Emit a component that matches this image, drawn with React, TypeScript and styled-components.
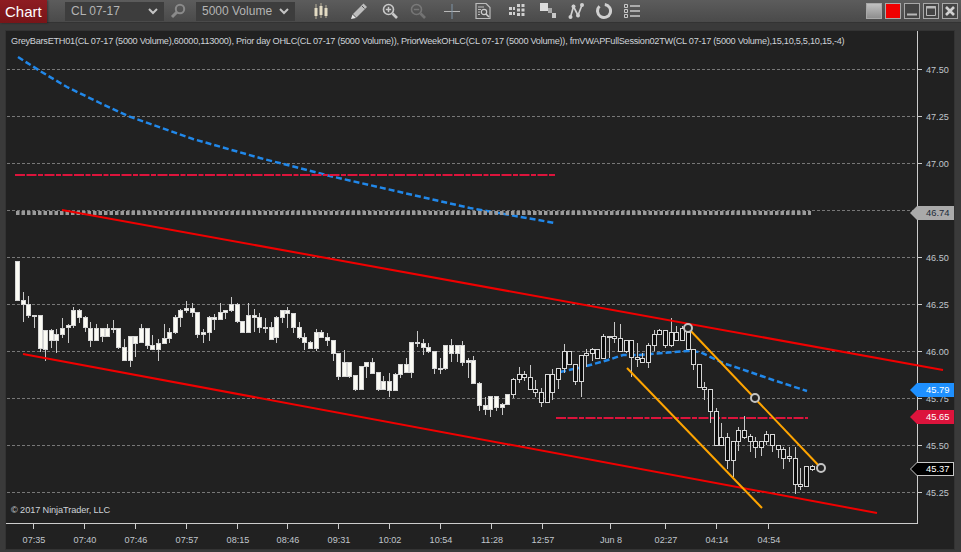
import styled, { createGlobalStyle } from "styled-components";

const GlobalStyle = createGlobalStyle`
  html, body {
    margin: 0;
    padding: 0;
    height: 100%;
    overflow: hidden;
    background: #3a3a3a;
    font-family: "Liberation Sans", Arial, sans-serif;
  }
`;

const Page = styled.div`
  width: 961px;
  height: 552px;
  display: flex;
  flex-direction: column;
  overflow: hidden;
`;

const Toolbar = styled.div`
  height: 23px;
  flex: none;
  display: flex;
  align-items: center;
  background: linear-gradient(#5c5c5c, #4a4a4a);
  border-bottom: 1px solid #333;
  box-sizing: border-box;
`;

const ChartTab = styled.div`
  width: 47px;
  height: 23px;
  flex: none;
  box-sizing: border-box;
  padding-left: 5px;
  line-height: 23px;
  font-size: 15px;
  color: #fff;
  background: linear-gradient(#8e1c22, #781518);
  box-shadow: 1px 0 2px rgba(0, 0, 0, 0.4);
`;

const Select = styled.div<{ $gap: number }>`
  width: 99px;
  height: 19px;
  flex: none;
  margin-left: ${(p) => p.$gap}px;
  padding: 0 6px;
  box-sizing: border-box;
  display: flex;
  align-items: center;
  justify-content: space-between;
  background: #3d3d3d;
  color: #b4b4b4;
  font-size: 12px;
`;

const Tool = styled.span<{ $gap: number; $dim?: boolean }>`
  width: 16px;
  height: 16px;
  flex: none;
  display: block;
  margin-left: ${(p) => p.$gap}px;
  opacity: ${(p) => (p.$dim ? 0.3 : 1)};
  svg {
    display: block;
  }
`;

const WindowButtons = styled.div`
  margin-left: auto;
  margin-right: 3px;
  display: flex;
  gap: 3px;
`;

const WindowButton = styled.div<{ $fill: string }>`
  width: 16px;
  height: 16px;
  box-sizing: border-box;
  border: 1px solid #a8a8a8;
  background: ${(p) => p.$fill};
  svg {
    display: block;
  }
`;

const Frame = styled.div`
  position: relative;
  width: 950px;
  height: 520px;
  margin: 7px 0 0 5px;
  background: #212121;
  box-shadow: inset 0 0 0 1px #333;
  flex: none;
`;

const ChartSvg = styled.svg`
  display: block;
`;

const Legend = styled.div`
  position: absolute;
  left: 6px;
  top: 5px;
  font-size: 9.2px;
  letter-spacing: -0.27px;
  line-height: 12px;
  color: #ced3d8;
  white-space: nowrap;
`;

const Copyright = styled.div`
  position: absolute;
  left: 6px;
  top: 474px;
  font-size: 9.2px;
  letter-spacing: -0.1px;
  line-height: 12px;
  color: #ced3d8;
`;

const TickLabel = styled.text`
  font-family: "Liberation Sans", Arial, sans-serif;
  font-size: 9.1px;
  fill: #c0c6cc;
`;

const PriceTag = styled.div<{ $fill: string; $ink: string; $edge?: string }>`
  position: absolute;
  left: 905px;
  width: 44px;
  height: 14px;
  box-sizing: border-box;
  padding: 1px;
  background: ${(p) => p.$edge || p.$fill};
  clip-path: polygon(0 50%, 7px 0, 100% 0, 100% 100%, 7px 100%);
  span {
    display: block;
    height: 100%;
    padding-left: 15px;
    line-height: 12px;
    font-size: 9.4px;
    color: ${(p) => p.$ink};
    background: ${(p) => p.$fill};
    clip-path: polygon(0 50%, 6px 0, 100% 0, 100% 100%, 6px 100%);
  }
`;

const Chevron = () => (
  <svg width="10" height="7" viewBox="0 0 10 7">
    <path d="M1 1l4 4 4-4" fill="none" stroke="#c4c4c4" strokeWidth="2" />
  </svg>
);

const Icon = ({ children }: { children: React.ReactNode }) => (
  <svg width="16" height="16" viewBox="0 0 16 16">
    {children}
  </svg>
);

const Magnifier = ({ plus, minus }: { plus?: boolean; minus?: boolean }) => (
  <Icon>
    <circle cx="6.5" cy="6.5" r="5" fill="none" stroke="#c8c8c8" strokeWidth="1.6" />
    <path d="M10.5 10.5L15 15" stroke="#c8c8c8" strokeWidth="2.6" />
    {(plus || minus) && <path d="M3.8 6.5h5.4" stroke="#c8c8c8" strokeWidth="1.5" />}
    {plus && <path d="M6.5 3.8v5.4" stroke="#c8c8c8" strokeWidth="1.5" />}
  </Icon>
);

// [body top, body bottom, wick top, wick bottom] in screen pixels
const bars: number[][] = [
  [261, 300, 261, 300], [300, 304, 292, 322], [304, 315, 296, 318], [315, 316, 315, 328], [315, 348, 315, 352],
  [330, 349, 330, 361], [330, 340, 329, 348], [334, 340, 329, 353], [328, 334, 318, 338], [325, 327, 324, 343],
  [310, 325, 307, 328], [310, 317, 309, 323], [317, 327, 316, 332], [328, 340, 322, 347], [328, 340, 324, 340],
  [328, 336, 328, 342], [328, 336, 324, 336], [328, 329, 320, 333], [328, 347, 328, 349], [347, 360, 339, 360],
  [336, 360, 336, 367], [336, 343, 336, 357], [328, 342, 324, 342], [328, 345, 328, 349], [345, 349, 335, 349],
  [343, 349, 339, 361], [338, 343, 324, 343], [332, 338, 328, 343], [317, 332, 315, 334], [310, 317, 309, 327],
  [308, 310, 301, 313], [308, 312, 303, 317], [312, 334, 312, 338], [332, 334, 329, 343], [317, 332, 316, 341],
  [317, 319, 314, 330], [312, 319, 303, 319], [310, 312, 310, 319], [304, 310, 297, 312], [304, 321, 303, 323],
  [321, 332, 321, 332], [315, 332, 303, 332], [315, 317, 309, 332], [317, 327, 313, 333], [327, 328, 318, 333],
  [327, 339, 322, 339], [317, 337, 316, 343], [310, 317, 310, 323], [310, 313, 307, 328], [313, 327, 313, 333],
  [327, 337, 322, 339], [337, 342, 333, 350], [342, 348, 341, 349], [332, 348, 329, 351], [332, 337, 330, 337],
  [337, 340, 333, 346], [340, 353, 340, 361], [353, 376, 353, 380], [362, 376, 350, 376], [362, 376, 362, 378],
  [375, 389, 375, 391], [366, 389, 366, 389], [362, 366, 362, 378], [362, 373, 358, 373], [372, 389, 372, 391],
  [381, 389, 376, 390], [381, 390, 373, 397], [374, 390, 373, 390], [364, 374, 364, 378], [364, 372, 358, 372],
  [342, 372, 342, 378], [342, 343, 331, 347], [343, 347, 339, 355], [347, 351, 343, 353], [351, 368, 351, 374],
  [368, 369, 358, 374], [345, 368, 345, 370], [345, 353, 339, 362], [345, 353, 345, 362], [345, 362, 341, 366],
  [360, 362, 358, 378], [360, 383, 356, 383], [383, 405, 382, 411], [405, 409, 397, 415], [396, 409, 396, 417],
  [396, 407, 396, 411], [404, 407, 403, 415], [394, 404, 394, 404], [379, 394, 378, 398], [374, 379, 367, 383],
  [374, 377, 371, 381], [377, 389, 365, 389], [389, 392, 380, 397], [392, 402, 388, 407], [374, 402, 374, 402],
  [374, 392, 369, 400], [368, 379, 368, 389], [351, 368, 344, 373], [351, 364, 351, 364], [364, 381, 364, 385],
  [355, 381, 355, 397], [353, 355, 349, 367], [349, 353, 348, 361], [349, 358, 349, 358], [336, 358, 334, 358],
  [336, 337, 336, 358], [336, 338, 322, 343], [338, 351, 324, 351], [340, 351, 340, 353], [340, 357, 340, 377],
  [357, 359, 343, 367], [358, 362, 353, 362], [345, 362, 343, 368], [334, 345, 330, 351], [330, 334, 329, 334],
  [330, 345, 330, 348], [332, 345, 318, 347], [332, 340, 326, 340], [328, 340, 326, 340], [332, 349, 332, 349],
  [349, 364, 349, 370], [364, 387, 364, 387], [387, 389, 382, 400], [389, 411, 389, 423], [411, 445, 408, 445],
  [437, 445, 423, 445], [437, 460, 433, 469], [441, 460, 441, 477], [430, 441, 427, 451], [430, 437, 416, 439],
  [436, 441, 434, 452], [441, 447, 437, 458], [441, 447, 441, 456], [434, 441, 431, 445], [434, 445, 434, 452],
  [445, 449, 445, 458], [449, 458, 447, 469], [456, 458, 447, 462], [458, 484, 447, 494], [484, 486, 468, 490],
  [466, 486, 466, 486], [466, 469, 465, 471],
];

// 46.75 has a grid line but its label sits under the 46.74 price tag
const priceGrid = [
  [69, "47.50"], [116, "47.25"], [163, "47.00"], [210, ""], [257, "46.50"],
  [304, "46.25"], [351, "46.00"], [398, "45.75"], [445, "45.50"], [492, "45.25"],
] as const;

const timeTicks = [
  [33, "07:35"], [84, "07:40"], [135, "07:46"], [186, "07:57"], [237, "08:15"], [287, "08:46"], [338, "09:31"],
  [389, "10:02"], [440, "10:54"], [491, "11:28"], [542, "12:57"], [610, "Jun 8"], [665, "02:27"], [716, "04:14"], [768, "04:54"],
] as const;

const vwapTop = "M18 57L40 71 67 87 100 103 128 116 193 139 260 158 330 176 400 192 470 208 555 223";
const vwapLow = "M560 372L583 367 608 360 623 355 640 355 673 352 688 351 700 352 723 363 747 371 773 380 807 391";
const levelDash = "10 1.500 10 1.500 5 1.500 10 1.500 5 1.500";

export default function App() {
  return (
    <Page>
      <GlobalStyle />
      <Toolbar>
        <ChartTab>Chart</ChartTab>
        <Select $gap={18}>
          CL 07-17
          <Chevron />
        </Select>
        <Tool $gap={6}>
          <svg width="16" height="16" viewBox="0 0 16 16">
            <circle cx="10" cy="6" r="4.2" fill="none" stroke="#8a8a8a" strokeWidth="2" />
            <path d="M7 9l-5 5" stroke="#8a8a8a" strokeWidth="3" />
          </svg>
        </Tool>
        <Select $gap={10}>
          5000 Volume
          <Chevron />
        </Select>
        <Tool $gap={18}>
          <Icon>
            <path d="M3 1v15M8 0v15M13 2v13" stroke="#b8b09a" strokeWidth="1" />
            <path d="M1.500 5h3v8h-3zM6.500 3h3v9h-3zM11.500 5h3v8h-3z" fill="#e4dcc4" />
          </Icon>
        </Tool>
        <Tool $gap={22}>
          <Icon>
            <path d="M12.500 .5L16 4 5.500 14.500 2 11z" fill="#bdbdbd" />
            <path d="M1.500 11.500l3.500 3.500-5 1z" fill="#e8e8e8" />
            <path d="M11 3l2.500 2.500" stroke="#555" strokeWidth="1" />
          </Icon>
        </Tool>
        <Tool $gap={15}>
          <Magnifier plus />
        </Tool>
        <Tool $gap={12} $dim>
          <Magnifier minus />
        </Tool>
        <Tool $gap={18}>
          <Icon>
            <path d="M0 8.500h16" stroke="#b8b8b8" strokeWidth="1" />
            <path d="M8 1v15" stroke="#7e94a6" strokeWidth="1" />
          </Icon>
        </Tool>
        <Tool $gap={15}>
          <Icon>
            <path d="M1 .5h10l4 4v11H1z" fill="none" stroke="#bcbcbc" strokeWidth="1.200" />
            <path d="M3 4h6M3 6.500h3M3 9h2M3 11.500h2" stroke="#bcbcbc" strokeWidth="1" />
            <circle cx="9" cy="9" r="2.700" fill="none" stroke="#d0d0d0" strokeWidth="1.200" />
            <path d="M11 11l3 3" stroke="#d0d0d0" strokeWidth="1.600" />
          </Icon>
        </Tool>
        <Tool $gap={18}>
          <Icon>
            <path d="M0 4h3v3H0zM0 9h3v3H0zM4 4h2v3H4zM4 9h2v3H4z" fill="#d0d0d0" />
            <path d="M8 1h3v3H8zM8 5.500h3v3H8zM8 10h3v3H8zM12.500 1h3v3h-3zM12.500 5.500h3v3h-3zM12.500 10h3v3h-3z" fill="#d0d0d0" />
          </Icon>
        </Tool>
        <Tool $gap={15}>
          <Icon>
            <path d="M0 0h8v8H0z" fill="#dcdcdc" />
            <path d="M8 5h4v5H8z" fill="#a8a8a8" />
            <path d="M12 10h4v5h-4z" fill="#c8c8c8" />
          </Icon>
        </Tool>
        <Tool $gap={12}>
          <Icon>
            <path d="M2.500 14L5.500 3.500 10 12.500 14 2" fill="none" stroke="#d0d0d0" strokeWidth="1.700" />
            <circle cx="2.500" cy="14" r="2" fill="#d0d0d0" />
            <circle cx="5.500" cy="3.500" r="2" fill="#d0d0d0" />
            <circle cx="10" cy="12.500" r="2" fill="#d0d0d0" />
            <circle cx="14" cy="2" r="2" fill="#d0d0d0" />
          </Icon>
        </Tool>
        <Tool $gap={12}>
          <Icon>
            <path d="M8.800 1.500A6.500 6.500 0 1 1 3.500 3.300" fill="none" stroke="#d0d0d0" strokeWidth="3" />
          </Icon>
        </Tool>
        <Tool $gap={12}>
          <Icon>
            <path d="M.5 1.500h3v3h-3zM.5 6.500h3v3h-3zM.5 11.500h3v3h-3z" fill="none" stroke="#c8c8c8" strokeWidth="1" />
            <path d="M6 3h10M6 8h10M6 13h10" stroke="#c8c8c8" strokeWidth="1.600" />
          </Icon>
        </Tool>
        <WindowButtons>
          <WindowButton $fill="linear-gradient(#c0c0c0, #8e8e8e)" />
          <WindowButton $fill="#f00000" />
          <WindowButton $fill="#444">
            <svg width="14" height="14" viewBox="0 0 14 14">
              <path d="M2 10.500h10" stroke="#b8b8b8" strokeWidth="2" />
            </svg>
          </WindowButton>
          <WindowButton $fill="#444">
            <svg width="14" height="14" viewBox="0 0 14 14">
              <path d="M2.500 2.500h9v9h-9z" fill="none" stroke="#b8b8b8" />
              <path d="M2 3.500h10" stroke="#b8b8b8" strokeWidth="2" />
            </svg>
          </WindowButton>
          <WindowButton $fill="#444">
            <svg width="14" height="14" viewBox="0 0 14 14">
              <path d="M3 3l8 8M11 3l-8 8" stroke="#d0d0d0" strokeWidth="2.600" />
            </svg>
          </WindowButton>
        </WindowButtons>
      </Toolbar>
      <Frame>
        {/* viewBox keeps the drawing in screen pixels, the frame starts at 5,30 */}
        <ChartSvg width="950" height="520" viewBox="5 30 950 520">
          <g shapeRendering="crispEdges">
            {priceGrid.map(([y]) => (
              <g key={y}>
                <path d={`M7 ${y + 0.5}H917`} stroke="#777" strokeDasharray="3 2" />
                <path d={`M917 ${y + 0.5}h5`} stroke="#ccc" />
              </g>
            ))}
            <path d="M917.500 31V523" stroke="#ccc" />
            <path d="M6 523.500H917.500" stroke="#ccc" />
            {timeTicks.map(([x, label]) => (
              <path key={label} d={`M${x + 0.5} 524v5`} stroke="#ccc" />
            ))}
          </g>
          {priceGrid
            .filter(([, label]) => label)
            .map(([y, label]) => (
              <TickLabel key={label} x="926" y={y + 3.5}>
                {label}
              </TickLabel>
            ))}
          {timeTicks.map(([x, label]) => (
            <TickLabel key={label} x={x + 1} y="543" textAnchor="middle">
              {label}
            </TickLabel>
          ))}

          <path d={vwapTop} fill="none" stroke="#2188ea" strokeWidth="2.500" strokeDasharray="6 3" />
          <path d={vwapLow} fill="none" stroke="#2188ea" strokeWidth="2.500" strokeDasharray="6 3" />
          <path d="M15 175H555" stroke="#dc143c" strokeWidth="2" strokeDasharray={levelDash} />
          <path d="M16 213H811" stroke="#9a9a9a" strokeWidth="4" strokeDasharray="3.500 2" />
          <path d="M556 418H808" stroke="#dc143c" strokeWidth="2" strokeDasharray={levelDash} />

          <g shapeRendering="crispEdges">
            {bars.map(([top, bottom, wickTop, wickBottom], i) => {
              const x = Math.round(17 + 5.635 * i) + 0.5;
              return (
                <g key={i}>
                  <path d={`M${x} ${wickTop}V${wickBottom}`} stroke="#c8c8c8" />
                  <rect
                    x={x - 2}
                    y={top + 0.5}
                    width="4"
                    height={bottom - top}
                    fill={i < 88 ? "#fbfbf4" : "#0c0c0c"}
                    stroke="#d6d6d6"
                  />
                </g>
              );
            })}
          </g>

          <path d="M62 210L943 370" stroke="#f00000" strokeWidth="2" />
          <path d="M23 354L877 513" stroke="#f00000" strokeWidth="2" />
          <path d="M688 328L821 468" stroke="#ffa500" strokeWidth="2" />
          <path d="M627 368L762 508" stroke="#ffa500" strokeWidth="2" />
          <circle cx="688" cy="328" r="4" fill="#222" stroke="#c4c4c4" strokeWidth="2" />
          <circle cx="755" cy="398" r="4" fill="#222" stroke="#c4c4c4" strokeWidth="2" />
          <circle cx="821" cy="468" r="4" fill="#222" stroke="#c4c4c4" strokeWidth="2" />
        </ChartSvg>
        <Legend>
          GreyBarsETH01(CL 07-17 (5000 Volume),60000,113000), Prior day OHLC(CL 07-17 (5000 Volume)), PriorWeekOHLC(CL
          07-17 (5000 Volume)), fmVWAPFullSession02TW(CL 07-17 (5000 Volume),15,10,5,5,10,15,-4)
        </Legend>
        <Copyright>© 2017 NinjaTrader, LLC</Copyright>
        <PriceTag $fill="#aaaaaa" $ink="#1c2a38" style={{ top: 176 }}>
          <span>46.74</span>
        </PriceTag>
        <PriceTag $fill="#1e90ff" $ink="#fff" style={{ top: 353 }}>
          <span>45.79</span>
        </PriceTag>
        <PriceTag $fill="#dc143c" $ink="#fff" style={{ top: 380 }}>
          <span>45.65</span>
        </PriceTag>
        <PriceTag $fill="#000" $ink="#fff" $edge="#c8c8c8" style={{ top: 432 }}>
          <span>45.37</span>
        </PriceTag>
      </Frame>
    </Page>
  );
}
